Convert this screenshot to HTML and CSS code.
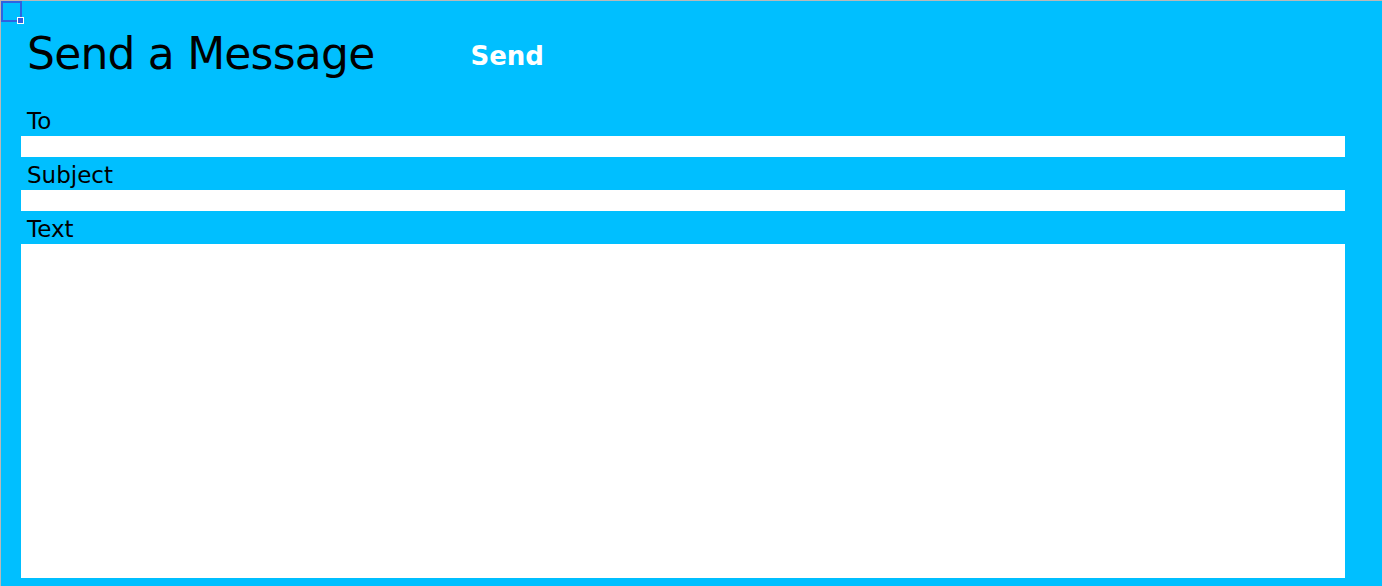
FILE: index.html
```html
<!DOCTYPE html>
<html>
<head>
<meta charset="utf-8">
<title>Send a Message</title>
<link rel="stylesheet" href="styles.css">
</head>
<body>
<div class="page">
  <span class="handle"><span class="handle-dot"></span></span>
  <header class="head">
    <h1 class="title">Send a Message</h1>
    <button class="send" type="button">Send</button>
  </header>
  <form class="form">
    <label class="label" for="to">To</label>
    <input class="field" id="to" type="text">
    <label class="label" for="subject">Subject</label>
    <input class="field" id="subject" type="text">
    <label class="label" for="text">Text</label>
    <textarea class="area" id="text"></textarea>
  </form>
</div>
</body>
</html>
```

FILE: styles.css
```css
html, body {
  margin: 0;
  padding: 0;
  height: 100%;
  background: #00bfff;
}
.page {
  position: relative;
  box-sizing: border-box;
  height: 586px;
  background: #00bfff;
  border-left: 1px solid #b9b9b9;
  border-top: 1px solid #b9b9b9;
  padding: 0 37px 0 20px;
  font-family: "DejaVu Sans", sans-serif;
  color: #000;
}
.handle {
  position: absolute;
  left: 0;
  top: 0;
  width: 17px;
  height: 17px;
  border: 2px solid #2f63e0;
}
.handle-dot {
  position: absolute;
  left: 14px;
  top: 14px;
  width: 5px;
  height: 5px;
  background: #2f63e0;
  border: 1px solid #fff;
}
.head {
  display: flex;
  align-items: flex-start;
  box-sizing: border-box;
  height: 102px;
  padding: 0 0 0 6px;
}
.title {
  margin: 31px 0 0;
  font-weight: normal;
  font-size: 44px;
  line-height: 44px;
  letter-spacing: -0.8px;
}
.send {
  margin: 40px 0 0 96px;
  padding: 0;
  border: none;
  background: none;
  color: #fff;
  font-family: "DejaVu Sans", sans-serif;
  font-size: 26px;
  line-height: 30px;
  font-weight: bold;
}
.form {
  display: flex;
  flex-direction: column;
}
.label {
  display: block;
  box-sizing: border-box;
  height: 33px;
  padding: 3px 0 0 6px;
  line-height: 30px;
  font-size: 23px;
}
.field {
  display: block;
  box-sizing: border-box;
  height: 21px;
  margin: 0;
  padding: 0 4px;
  border: none;
  background: #fff;
  outline: none;
}
.area {
  display: block;
  box-sizing: border-box;
  height: 334px;
  margin: 0;
  padding: 4px;
  border: none;
  background: #fff;
  resize: none;
  outline: none;
}
```
